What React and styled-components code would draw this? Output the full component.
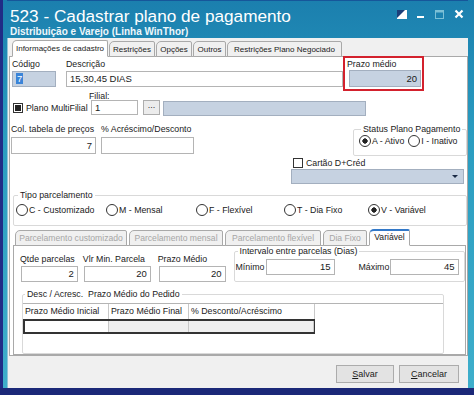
import React from "react";
import styled, { createGlobalStyle, css } from "styled-components";

const Global = createGlobalStyle`
  html, body { margin: 0; padding: 0; background: #1b2878; }
  * { box-sizing: border-box; }
  body { font-family: "Liberation Sans", Arial, sans-serif; font-size: 8.8px; color: #1a1a1a; }
`;

const Screen = styled.div`
  width: 474px;
  height: 395px;
  overflow: hidden;
  background: #1b2878;
`;

const Frame = styled.div`
  width: 474px;
  height: 388px;
  display: flex;
  flex-direction: column;
  border-left: 3px solid #202c86;
  background: linear-gradient(180deg, #1b7fae 0%, #2a9cc0 35%, #3eaecb 100%);
  padding: 0 6px 0 4px;
`;

const TitleBar = styled.div`
  height: 38px;
  flex: none;
  display: flex;
  align-items: flex-start;
  justify-content: space-between;
  padding: 5px 4px 0 3px;
  border-top: 1px solid #16569a;
`;

const TitleText = styled.div`
  display: flex;
  flex-direction: column;
`;

const Title = styled.div`
  color: #fff;
  font-size: 17.2px;
  line-height: 20px;
`;

const Subtitle = styled.div`
  color: #eef7fb;
  font-weight: bold;
  font-size: 10px;
  line-height: 11px;
`;

const Controls = styled.div`
  display: flex;
  align-items: center;
  gap: 10px;
  padding-top: 3px;
`;

const Client = styled.div`
  flex: 1;
  background: #f0f0f0;
  display: flex;
  flex-direction: column;
  padding-top: 2px;
  border-left: 1px solid #8fc4d8;
`;

const TabRow = styled.div`
  display: flex;
  align-items: flex-end;
  gap: ${(p) => p.$gap || 1}px;
  padding-left: ${(p) => p.$indent || 0}px;
  margin-top: ${(p) => p.$top || 0}px;
  margin-bottom: -1px;
  position: relative;
  z-index: 1;
`;

const Tab = styled.div`
  width: ${(p) => p.$w}px;
  height: ${(p) => (p.$active ? 17 : 16)}px;
  font-size: ${(p) => p.$size || 8}px;
  line-height: 15px;
  text-align: center;
  border: 1px solid #a9a9a9;
  border-bottom: ${(p) => (p.$active ? "1px solid #fff" : "1px solid #a9a9a9")};
  border-radius: 5px 2px 0 0;
  white-space: nowrap;
  overflow: hidden;
  background: ${(p) => (p.$active ? "#fff" : "#f0f0f0")};
  color: ${(p) => (p.$faded ? "#a6a6a6" : "#1a1a1a")};
  ${(p) =>
    p.$blue &&
    css`
      border-top: 2px solid #3278c8;
      line-height: 13px;
    `}
`;

const Panel = styled.div`
  height: 300px;
  margin-left: 1px;
  background: #fff;
  border: 1px solid #a9a9a9;
  display: flex;
  flex-direction: column;
`;

const Row = styled.div`
  display: flex;
  align-items: ${(p) => p.$align || "flex-end"};
  margin-top: ${(p) => p.$top || 0}px;
`;

const Column = styled.div`
  display: flex;
  flex-direction: column;
  width: ${(p) => p.$w}px;
  margin-left: ${(p) => p.$ml || 0}px;
`;

const Field = styled.div`
  display: flex;
  flex-direction: column;
  width: ${(p) => p.$w}px;
  margin-left: ${(p) => p.$ml || 0}px;
`;

const Label = styled.div`
  height: ${(p) => p.$h || 12}px;
  padding-top: ${(p) => p.$pt || 0}px;
  line-height: 10px;
  white-space: nowrap;
  margin-left: ${(p) => p.$ml || 0}px;
`;

const Input = styled.div`
  flex: none;
  height: ${(p) => p.$h || 16}px;
  width: ${(p) => (p.$w ? p.$w + "px" : "100%")};
  border: 1px solid ${(p) => (p.$blue ? "#a3afbf" : "#b4b4b4")};
  background: ${(p) => (p.$blue ? "#c6d2e1" : "#fff")};
  font-size: 9.5px;
  line-height: ${(p) => (p.$h || 16) - 2}px;
  padding: 0 3px;
  text-align: ${(p) => (p.$right ? "right" : "left")};
  white-space: nowrap;
  margin-left: ${(p) => p.$ml || 0}px;
  margin-bottom: ${(p) => p.$mb || 0}px;
`;

const Selected = styled.span`
  background: #3a84d8;
  color: #fff;
  padding: 0 1px;
`;

const RedBox = styled.div`
  width: 81px;
  height: 35px;
  margin-top: -1px;
  border: 2px solid #d3212d;
  padding: 1px 0 0 2px;
  display: flex;
  flex-direction: column;
`;

const Check = styled.span`
  width: 10px;
  height: 10px;
  border: 1px solid #333;
  background: #fff;
  display: inline-flex;
  align-items: center;
  justify-content: center;
  margin-right: 3px;
  flex: none;
  &::after {
    content: "";
    width: 6px;
    height: 6px;
    background: ${(p) => (p.$on ? "#222" : "transparent")};
  }
`;

const CheckLabel = styled.div`
  display: flex;
  align-items: center;
  height: ${(p) => p.$h || 15}px;
  width: ${(p) => (p.$w ? p.$w + "px" : "auto")};
  white-space: nowrap;
  margin-left: ${(p) => p.$ml || 0}px;
  margin-top: ${(p) => p.$mt || 0}px;
`;

const DotsButton = styled.div`
  width: 17px;
  height: 15px;
  border: 1px solid #adadad;
  background: #ececec;
  margin-left: 5px;
  font-size: 9px;
  line-height: 9px;
  text-align: center;
  color: #333;
`;

const GroupBox = styled.fieldset`
  margin: ${(p) => p.$mt || 0}px 0 0 ${(p) => p.$ml || 0}px;
  width: ${(p) => p.$w}px;
  height: ${(p) => p.$h}px;
  border: 1px solid #d9d9d9;
  border-radius: 2px;
  padding: ${(p) => p.$pad || "0 4px"};
  display: flex;
  align-items: ${(p) => p.$items || "center"};
  min-width: 0;
  & > legend {
    padding: 0 2px;
    margin-left: 2px;
    line-height: 11px;
    white-space: nowrap;
  }
`;

const Radio = styled.div`
  display: flex;
  align-items: center;
  white-space: nowrap;
  width: ${(p) => (p.$w ? p.$w + "px" : "auto")};
  margin-right: ${(p) => p.$mr || 0}px;
  &::before {
    content: "";
    width: 10px;
    height: 10px;
    border-radius: 50%;
    border: 1px solid #333;
    margin-right: 1px;
    background: ${(p) =>
      p.$on ? "radial-gradient(circle, #222 0 2.4px, #fff 2.9px)" : "#fff"};
  }
`;

const Select = styled.div`
  width: 173px;
  height: 15px;
  background: #c6d2e1;
  border: 1px solid #a3afbf;
  display: flex;
  justify-content: flex-end;
  align-items: center;
  padding-right: 5px;
  margin-top: 1px;
  &::after {
    content: "";
    border-left: 3px solid transparent;
    border-right: 3px solid transparent;
    border-top: 3px solid #1a2a44;
  }
`;

const SubPanel = styled.div`
  height: 111px;
  margin: 0 1px 0 3px;
  border: 1px solid #a9a9a9;
  display: flex;
  flex-direction: column;
  background: #fff;
`;

const Text = styled.span`
  white-space: nowrap;
  width: ${(p) => (p.$w ? p.$w + "px" : "auto")};
  margin-left: ${(p) => p.$ml || 0}px;
  flex: none;
`;

const Grid = styled.div`
  flex: 1;
  margin-top: 3px;
  border-top: 1px solid #b4b4b4;
  background: #fff;
  display: flex;
  flex-direction: column;
`;

const GridRow = styled.div`
  display: flex;
  height: ${(p) => p.$h}px;
  ${(p) =>
    p.$data &&
    css`
      border: 2px solid #333;
      border-width: 2px 1px 2px 2px;
      width: 292px;
    `}
`;

const Cell = styled.div`
  width: ${(p) => p.$w}px;
  line-height: 15px;
  padding-left: 2px;
  white-space: nowrap;
  overflow: hidden;
  border-right: 1px solid #c8c8c8;
  background: ${(p) => (p.$grey ? "#efefef" : "#fff")};
`;

const Footer = styled.div`
  flex: 1;
  display: flex;
  justify-content: flex-end;
  align-items: flex-start;
  gap: 5px;
  padding: 9px 9px 0 0;
`;

const Button = styled.div`
  width: ${(p) => p.$w}px;
  height: 18px;
  border: 1px solid #acacac;
  background: #e3e3e3;
  font-size: 9px;
  line-height: 16px;
  text-align: center;
  & u {
    text-decoration: underline;
  }
`;

export default function App() {
  return (
    <Screen>
      <Global />
      <Frame>
        <TitleBar>
          <TitleText>
            <Title>523 - Cadastrar plano de pagamento</Title>
            <Subtitle>Distribuição e Varejo (Linha WinThor)</Subtitle>
          </TitleText>
          <Controls>
            <svg width="10" height="9" viewBox="0 0 10 9">
              <rect x="0" y="0" width="10" height="9" fill="#fff" />
              <path d="M0 0 H8 L0 8 Z" fill="#1c3f7a" />
            </svg>
            <svg width="8" height="9" viewBox="0 0 8 9">
              <rect x="0" y="6" width="7" height="2" fill="#fff" />
            </svg>
            <svg width="9" height="9" viewBox="0 0 9 9">
              <rect x="0.5" y="0.5" width="8" height="8" fill="none" stroke="#7cc0d6" />
              <rect x="0.5" y="0.5" width="8" height="2" fill="#7cc0d6" />
            </svg>
            <svg width="10" height="10" viewBox="0 0 10 10">
              <path d="M1.5 1.5 L8.5 8.5 M8.5 1.5 L1.5 8.5" stroke="#fff" strokeWidth="2.2" />
            </svg>
          </Controls>
        </TitleBar>
        <Client>
          <TabRow $indent={4} $gap={1}>
            <Tab $active $w={96}>Informações de cadastro</Tab>
            <Tab $w={46}>Restrições</Tab>
            <Tab $w={36}>Opções</Tab>
            <Tab $w={33}>Outros</Tab>
            <Tab $w={115}>Restrições Plano Negociado</Tab>
          </TabRow>
          <Panel>
            <Row $align="flex-start">
              <Field $w={44} $ml={2}>
                <Label $h={14} $pt={2}>Código</Label>
                <Input $blue>
                  <Selected>7</Selected>
                </Input>
              </Field>
              <Field $w={277} $ml={10}>
                <Label $h={14} $pt={2}>Descrição</Label>
                <Input>15,30,45 DIAS</Input>
              </Field>
              <RedBox>
                <Label $h={11}>Prazo médio</Label>
                <Input $blue $right $h={17} $w={72} $ml={2}>
                  20
                </Input>
              </RedBox>
            </Row>
            <Row>
              <CheckLabel $w={76} $ml={3}>
                <Check $on />
                Plano MultiFilial
              </CheckLabel>
              <Field $w={49}>
                <Label $h={9}>Filial:</Label>
                <Input $h={15} $w={47} $ml={2}>
                  1
                </Input>
              </Field>
              <DotsButton>...</DotsButton>
              <Input $blue $h={15} $w={203} $ml={3} $mb={-1} />
            </Row>
            <Row $align="flex-start" $top={9}>
              <Field $w={85} $ml={1}>
                <Label $h={13}>Col. tabela de preços</Label>
                <Input $right $h={17}>
                  7
                </Input>
              </Field>
              <Field $w={93} $ml={5}>
                <Label $h={13}>% Acréscimo/Desconto</Label>
                <Input $h={17} />
              </Field>
              <Column $w={176} $ml={97}>
                <GroupBox $w={114} $h={32} $ml={62} $pad="0 2px 3px 5px">
                  <legend>Status Plano Pagamento</legend>
                  <Radio $on $mr={4}>
                    A - Ativo
                  </Radio>
                  <Radio>I - Inativo</Radio>
                </GroupBox>
                <CheckLabel $h={11} $ml={2} $mt={1}>
                  <Check />
                  Cartão D+Créd
                </CheckLabel>
                <Select />
              </Column>
            </Row>
            <GroupBox $w={454} $h={36} $ml={3} $mt={6} $pad="0 2px 6px 2px">
              <legend>Tipo parcelamento</legend>
              <Radio $w={90}>C - Customizado</Radio>
              <Radio $w={90}>M - Mensal</Radio>
              <Radio $w={88}>F - Flexível</Radio>
              <Radio $w={84}>T - Dia Fixo</Radio>
              <Radio $on>V - Variável</Radio>
            </GroupBox>
            <TabRow $indent={5} $gap={2} $top={3}>
              <Tab $faded $w={112} $size={8.6}>Parcelamento customizado</Tab>
              <Tab $faded $w={94} $size={8.6}>Parcelamento mensal</Tab>
              <Tab $faded $w={96} $size={8.6}>Parcelamento flexível</Tab>
              <Tab $faded $w={44} $size={8.6}>Dia Fixo</Tab>
              <Tab $active $blue $w={41} $size={8.6}>Variável</Tab>
            </TabRow>
            <SubPanel>
              <Row>
                <Field $w={57} $ml={7}>
                  <Label $ml={-1}>Qtde parcelas</Label>
                  <Input $right>2</Input>
                </Field>
                <Field $w={67} $ml={6}>
                  <Label $ml={-1}>Vlr Min. Parcela</Label>
                  <Input $right>20</Input>
                </Field>
                <Field $w={67} $ml={8}>
                  <Label $ml={-1}>Prazo Médio</Label>
                  <Input $right>20</Input>
                </Field>
                <GroupBox $w={232} $h={36} $ml={8} $pad="0 0 4px 1px">
                  <legend>Intervalo entre parcelas (Dias)</legend>
                  <Text $w={29}>Mínimo</Text>
                  <Input $right $w={69} $ml={1}>
                    15
                  </Input>
                  <Text $w={31} $ml={24}>
                    Máximo
                  </Text>
                  <Input $right $w={69}>
                    45
                  </Input>
                </GroupBox>
              </Row>
              <GroupBox $w={422} $h={65} $ml={8} $mt={7} $pad="0" $items="stretch">
                <legend>Desc / Acresc.&nbsp; Prazo Médio do Pedido</legend>
                <Grid>
                  <GridRow $h={15}>
                    <Cell $w={86}>Prazo Médio Inicial</Cell>
                    <Cell $w={80}>Prazo Médio Final</Cell>
                    <Cell $w={126}>% Desconto/Acréscimo</Cell>
                  </GridRow>
                  <GridRow $h={15} $data>
                    <Cell $w={84} />
                    <Cell $w={80} $grey />
                    <Cell $w={125} $grey />
                  </GridRow>
                </Grid>
              </GroupBox>
            </SubPanel>
          </Panel>
          <Footer>
            <Button $w={58}>
              <u>S</u>alvar
            </Button>
            <Button $w={60}>
              <u>C</u>ancelar
            </Button>
          </Footer>
        </Client>
      </Frame>
    </Screen>
  );
}
